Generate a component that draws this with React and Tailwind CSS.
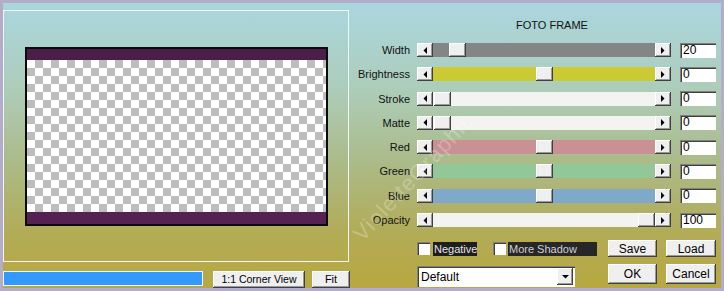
import React from "react";

const rows = [
  { label: "Width", track: "bg-[#858585]", thumb: "ml-[16px]", value: "20" },
  { label: "Brightness", track: "bg-[#cbca33]", thumb: "ml-[103px]", value: "0" },
  { label: "Stroke", track: "bg-[#f3f3f1]", thumb: "ml-[1px]", value: "0" },
  { label: "Matte", track: "bg-[#f3f3f1]", thumb: "ml-[1px]", value: "0" },
  { label: "Red", track: "bg-[#c99193]", thumb: "ml-[103px]", value: "0" },
  { label: "Green", track: "bg-[#92c897]", thumb: "ml-[103px]", value: "0" },
  { label: "Blue", track: "bg-[#7fa9cb]", thumb: "ml-[103px]", value: "0" },
  { label: "Opacity", track: "bg-[#f3f3f1]", thumb: "ml-[205px]", value: "100" },
];

const raised =
  "bg-[#efefef] shadow-[inset_-1px_-1px_0_#404040,inset_1px_1px_0_#ffffff,inset_-2px_-2px_0_#9a9a9a]";
const sunken =
  "bg-white shadow-[inset_1px_1px_0_#808080,inset_2px_2px_0_#404040,inset_-1px_-1px_0_#ffffff]";

const Arrow = ({ dir }) => (
  <svg width="4" height="7" viewBox="0 0 4 7">
    {dir === "left" ? (
      <polygon points="4,0 4,7 0.5,3.5" fill="#000" />
    ) : (
      <polygon points="0,0 0,7 3.5,3.5" fill="#000" />
    )}
  </svg>
);

const Button = ({ children, className }) => (
  <div
    className={`${raised} flex items-center justify-center text-black ${className}`}
  >
    {children}
  </div>
);

const SliderRow = ({ row }) => (
  <div className="flex items-center h-[14px]">
    <div className="w-[60px] text-right text-[11px] leading-[14px] text-[#111]">
      {row.label}
    </div>
    <div className="ml-[7px] w-[254px] h-[14px] flex">
      <div className={`${raised} w-[16px] h-[14px] flex items-center justify-center`}>
        <Arrow dir="left" />
      </div>
      <div className={`w-[222px] h-[14px] flex items-center ${row.track}`}>
        <div className={`${raised} w-[17px] h-[14px] ${row.thumb}`} />
      </div>
      <div className={`${raised} w-[16px] h-[14px] flex items-center justify-center`}>
        <Arrow dir="right" />
      </div>
    </div>
    <div
      className={`${sunken} ml-[9px] w-[36px] h-[15px] pl-[3px] text-[12px] leading-[15px] text-black`}
    >
      {row.value}
    </div>
  </div>
);

const App = () => {
  return (
    <div className="w-[724px] h-[291px] bg-[#b3adc9] p-[3px] font-['Liberation_Sans',Arial,sans-serif]">
      <div className="relative w-full h-full flex overflow-hidden bg-[linear-gradient(to_bottom,#aad6df_0%,#adcdba_30%,#abbb8a_55%,#b2ac58_80%,#b8a83f_100%)]">
        {/* Preview */}
        <div className="w-[347px] flex flex-col">
          <div className="mt-[7px] w-[346px] h-[253px] border border-[#eef6f6] pl-[21px] pt-[36px]">
            <div className="w-[303px] h-[179px] border-2 border-[#0a0a0a] flex flex-col">
              <div className="h-[11px] bg-[#4a1e49]" />
              <div className="flex-1 bg-[conic-gradient(#bdbdbd_25%,#ffffff_0_50%,#bdbdbd_0_75%,#ffffff_0)] bg-[length:16px_16px]" />
              <div className="h-[12px] bg-[#552052]" />
            </div>
          </div>
          <div className="mt-[9px] flex items-start">
            <div className="w-[200px] h-[15px] border border-[#f4f4f4] bg-[#3399ff]" />
            <Button className="ml-[10px] w-[92px] h-[17px] text-[10.5px]">1:1 Corner View</Button>
            <Button className="ml-[7px] w-[38px] h-[17px] text-[11px]">Fit</Button>
          </div>
        </div>

        {/* Controls */}
        <div className="flex-1 flex flex-col">
          <div className="pt-[15px] pl-[166px] h-[29px] text-[11px] leading-[14px] text-[#111]">
            FOTO FRAME
          </div>
          <div className="mt-[11px] flex flex-col gap-[10.3px]">
            {rows.map((row) => (
              <SliderRow key={row.label} row={row} />
            ))}
          </div>

          <div className="mt-[13px] flex items-center h-[17px]">
            <div className={`${sunken} ml-[67px] w-[13px] h-[13px]`} />
            <div className="ml-[3px] w-[44px] h-[14px] bg-[#1e1e1e] text-[#e4e4e4] text-[11px] leading-[14px] pl-[1px]">
              Negative
            </div>
            <div className={`${sunken} ml-[16px] w-[13px] h-[13px]`} />
            <div className="ml-[2px] w-[89px] h-[14px] bg-[#272727] text-[#d0d0d0] text-[11px] leading-[14px] pl-[1px]">
              More Shadow
            </div>
            <Button className="ml-[11px] w-[49px] h-[17px] text-[12px]">Save</Button>
            <Button className="ml-[9px] w-[50px] h-[17px] text-[12px]">Load</Button>
          </div>

          <div className="mt-[7px] flex items-start">
            <div className={`${sunken} ml-[67px] mt-[2px] w-[158px] h-[21px] flex items-center`}>
              <div className="flex-1 pl-[4px] text-[12px] text-black">Default</div>
              <div className={`${raised} mr-[2px] w-[16px] h-[17px] flex items-center justify-center`}>
                <svg width="7" height="4" viewBox="0 0 7 4">
                  <polygon points="0,0 7,0 3.5,3.5" fill="#000" />
                </svg>
              </div>
            </div>
            <Button className="ml-[33px] w-[49px] h-[20px] text-[12px]">OK</Button>
            <Button className="ml-[9px] w-[50px] h-[20px] text-[12px]">Cancel</Button>
          </div>
        </div>

        {/* watermark */}
        <div className="absolute left-[354px] top-[218px] -rotate-[47deg] origin-left text-[22px] tracking-[1px] text-white/25 pointer-events-none">
          VioletteGraphic
        </div>
      </div>
    </div>
  );
};

export default App;
